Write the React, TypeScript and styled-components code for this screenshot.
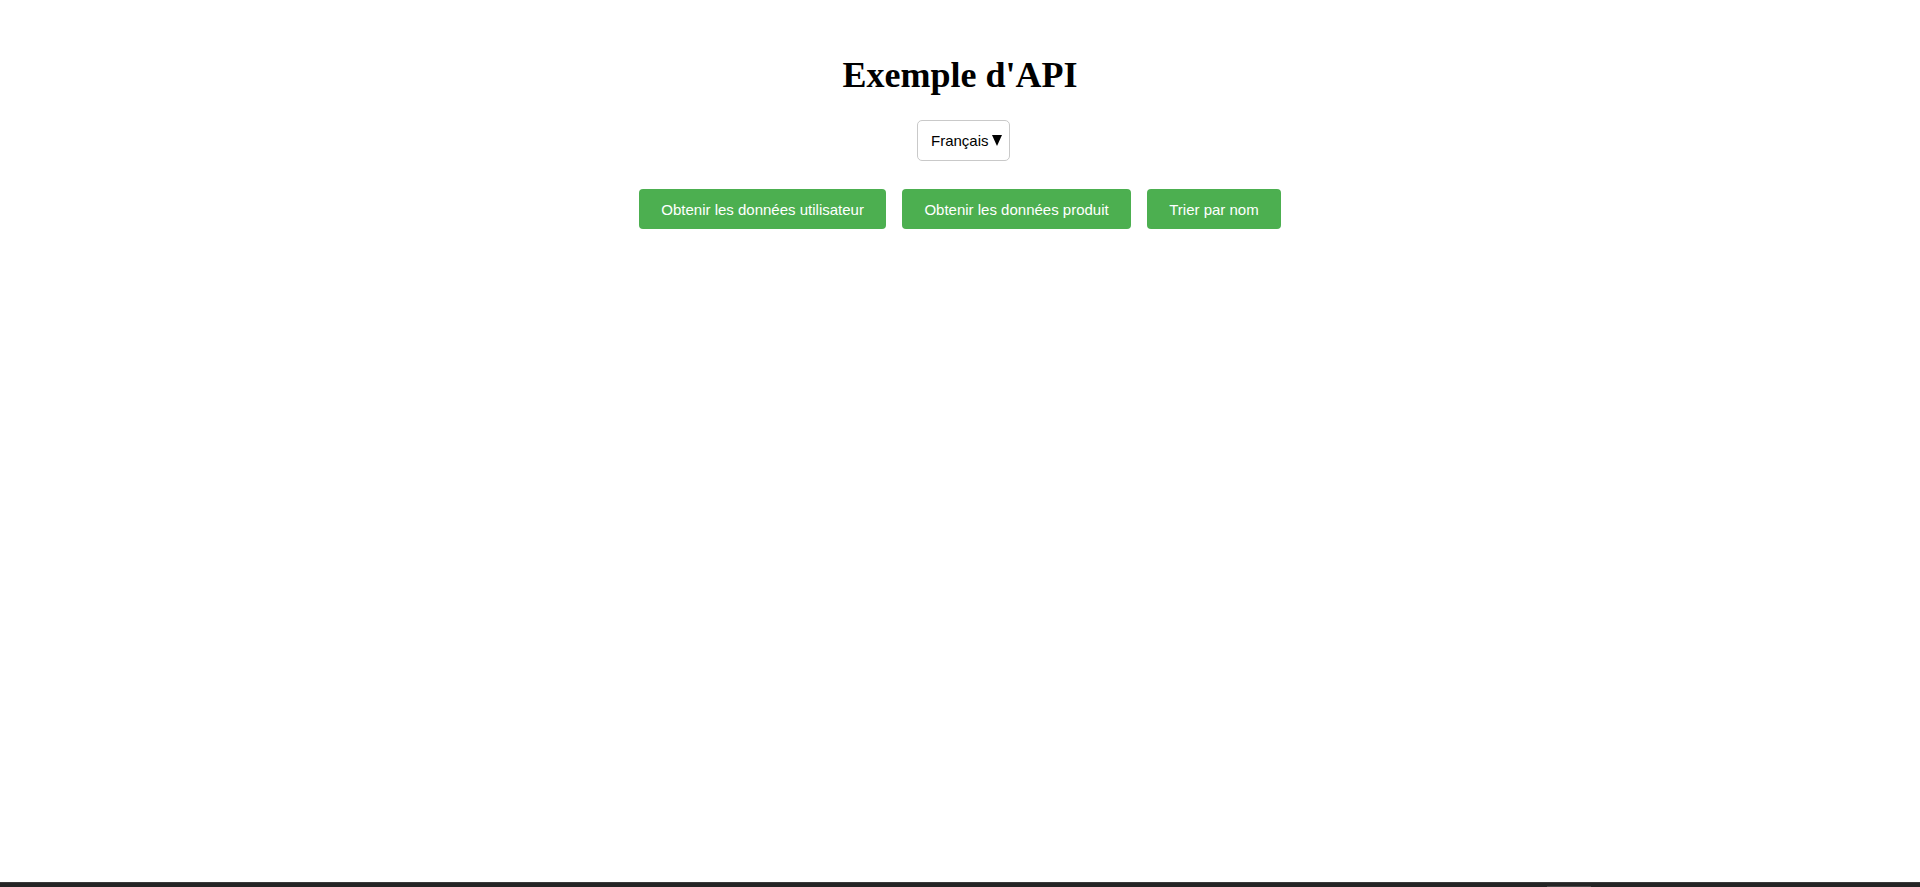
import React from "react";
import styled, { createGlobalStyle } from "styled-components";

const GlobalStyle = createGlobalStyle`
  html, body {
    margin: 0;
    padding: 0;
    background: #ffffff;
  }
  * { box-sizing: border-box; }
`;

const Page = styled.div`
  min-height: 100vh;
  display: flex;
  flex-direction: column;
  align-items: center;
  padding-top: 55px;
  font-family: "Liberation Sans", Arial, sans-serif;
`;

const Title = styled.h1`
  margin: 0;
  font-family: "Liberation Serif", "Times New Roman", serif;
  font-size: 36px;
  line-height: 41px;
  font-weight: bold;
  color: #000;
`;

const LangSelect = styled.button`
  margin: 24px 0 0 7px;
  height: 41px;
  width: 93px;
  display: flex;
  align-items: center;
  padding: 0 0 0 13px;
  background: #fff;
  border: 1px solid #c9c9c9;
  border-radius: 5px;
  font-family: "Liberation Sans", Arial, sans-serif;
  font-size: 15px;
  color: #000;
  cursor: pointer;
`;

const Caret = styled.svg`
  margin-left: 3px;
  width: 10px;
  height: 11px;
  flex: none;
`;

const ButtonRow = styled.div`
  margin-top: 28px;
  display: flex;
  gap: 16.5px;
`;

const ActionButton = styled.button`
  height: 40px;
  padding: 0 22px;
  background: #4caf50;
  color: #fff;
  border: none;
  border-radius: 4px;
  font-family: "Liberation Sans", Arial, sans-serif;
  font-size: 15px;
  white-space: nowrap;
  cursor: pointer;
`;

const BottomBar = styled.div`
  margin-top: auto;
  align-self: stretch;
  height: 5px;
  background: #242424;
  border-top: 1px solid #3a3a3a;
  display: flex;
  align-items: flex-end;
`;

const BarThumb = styled.div`
  margin-left: 1547px;
  width: 44px;
  height: 1px;
  background: #4a4a4a;
`;

export default function App() {
  return (
    <>
      <GlobalStyle />
      <Page>
        <Title>Exemple d'API</Title>
        <LangSelect type="button">
          Français
          <Caret viewBox="0 0 10 11" aria-hidden="true">
            <polygon points="0,0 10,0 5,11" fill="#000" />
          </Caret>
        </LangSelect>
        <ButtonRow>
          <ActionButton>Obtenir les données utilisateur</ActionButton>
          <ActionButton>Obtenir les données produit</ActionButton>
          <ActionButton>Trier par nom</ActionButton>
        </ButtonRow>
        <BottomBar>
          <BarThumb />
        </BottomBar>
      </Page>
    </>
  );
}
